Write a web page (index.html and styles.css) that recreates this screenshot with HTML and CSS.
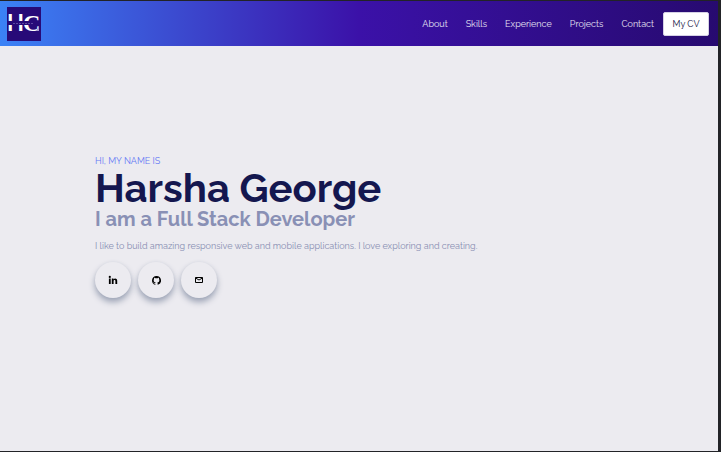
FILE: index.html
```html
<!DOCTYPE html>
<html lang="en">
<head>
<meta charset="utf-8">
<meta name="viewport" content="width=device-width, initial-scale=1">
<title>Harsha George</title>
<link rel="stylesheet" href="styles.css">
</head>
<body>
<header class="navbar">
  <a class="logo" href="#home" aria-label="Home">
    <svg viewBox="0 0 34 34" width="34" height="34" aria-hidden="true">
      <rect width="34" height="34" fill="#270a78"/>
      <g fill="#fff">
        <text class="logo-h" x="0" y="24">H</text>
        <text class="logo-c" x="16" y="24">C</text>
        <path d="M29 24 32 19V24Z" fill="#a99bd0"/>
      </g>
      <path d="M0 14h34v4H0z" fill="#270a78"/>
      <path d="M6 16.500h21" stroke="#5d48a0" stroke-width="1" stroke-dasharray="2 1"/>
    </svg>
  </a>
  <nav class="menu">
    <a href="#about">About</a>
    <a href="#skills">Skills</a>
    <a href="#experience">Experience</a>
    <a href="#projects">Projects</a>
    <a href="#contact">Contact</a>
  </nav>
  <button class="cv" type="button">My CV</button>
</header>
<main class="hero">
  <p class="greeting">HI, MY NAME IS</p>
  <h1>Harsha George</h1>
  <h2>I am a Full Stack Developer</h2>
  <p class="intro">I like to build amazing responsive web and mobile applications. I love exploring and creating.</p>
  <div class="social">
    <a href="#linkedin" aria-label="LinkedIn">
      <svg viewBox="0 0 10 10" width="10" height="10"><circle cx="1.800" cy="1.900" r="1.100"/><path d="M.9 3.600h1.800V9H.9zM3.800 3.600h1.700v.8c.8-1.400 3.700-1.400 3.700 1.300V9H7.400V6.100c0-1.400-1.800-1.300-1.800 0V9H3.800z"/></svg>
    </a>
    <a href="#github" aria-label="GitHub">
      <svg viewBox="0 0 16 16" width="9" height="9"><path d="M8 0C3.580 0 0 3.580 0 8c0 3.540 2.290 6.530 5.470 7.590.4.070.55-.17.55-.38v-1.490c-2.010.37-2.530-.49-2.690-.94-.09-.23-.48-.94-.82-1.130-.28-.15-.68-.52-.01-.53.63-.01 1.080.58 1.230.82.72 1.210 1.870.87 2.330.66.07-.52.28-.87.51-1.070-1.780-.2-3.640-.89-3.640-3.950 0-.87.31-1.590.82-2.150-.08-.2-.36-1.020.08-2.120 0 0 .67-.21 2.200.82a7.600 7.600 0 0 1 4 0c1.530-1.040 2.200-.82 2.200-.82.44 1.100.16 1.920.08 2.120.51.56.82 1.270.82 2.150 0 3.070-1.870 3.750-3.650 3.950.29.250.54.73.54 1.480v2.200c0 .21.150.46.55.38A8 8 0 0 0 8 0Z"/></svg>
    </a>
    <a href="#email" aria-label="Email">
      <svg viewBox="0 0 10 10" width="10" height="10"><path fill="none" stroke="#000" stroke-width="1" d="M1.500 2.500h7v5h-7zM1.500 3 5 5 8.500 3"/></svg>
    </a>
  </div>
</main>
</body>
</html>
```
FILE: styles.css
```css
* { box-sizing: border-box; }

body {
  margin: 0;
  min-height: 100vh;
  border: solid #222327;
  border-width: 1px 3px 1px 0;
  background: #ecebf0;
  font-family: Raleway, Lato, sans-serif;
  font-size: 9px;
}

a { color: inherit; text-decoration: none; }
h1, h2, p { margin: 0; }

.navbar {
  display: flex;
  align-items: center;
  height: 45px;
  padding: 0 9px 0 7px;
  background: linear-gradient(to right, #3b82f6, #3b11a8 50%, #270a70);
}

.logo { display: flex; margin-right: auto; }
.logo text { font-weight: 700; }
.logo-h { font-family: Lato, sans-serif; font-size: 22px; }
.logo-c { font-family: "Liberation Serif", serif; font-size: 24px; }

.menu {
  display: flex;
  gap: 18px;
  margin-right: 9px;
  color: #e4e1f2;
}

.cv {
  width: 46px;
  height: 24px;
  padding: 0;
  border: 1px solid #d5d1e5;
  border-radius: 2px;
  background: #fff;
  color: #111042;
  font: inherit;
}

.hero { padding: 108px 95px 0; }

.greeting { color: #6478f5; line-height: 14px; }

h1 {
  color: #14174f;
  font-size: 40px;
  font-weight: 700;
  line-height: 40px;
}

h2 {
  color: #8990b5;
  font-size: 20px;
  font-weight: 700;
  line-height: 22px;
}

.intro {
  margin-top: 9px;
  color: #888eb2;
  line-height: 14px;
}

.social { display: flex; gap: 7px; margin-top: 9px; }

.social a {
  display: grid;
  place-items: center;
  width: 36px;
  height: 36px;
  border-radius: 50%;
  background: #ecebf0;
  box-shadow: 0 4px 6px #9ca3b5, 0 0 3px #dfe0e7;
}
```
